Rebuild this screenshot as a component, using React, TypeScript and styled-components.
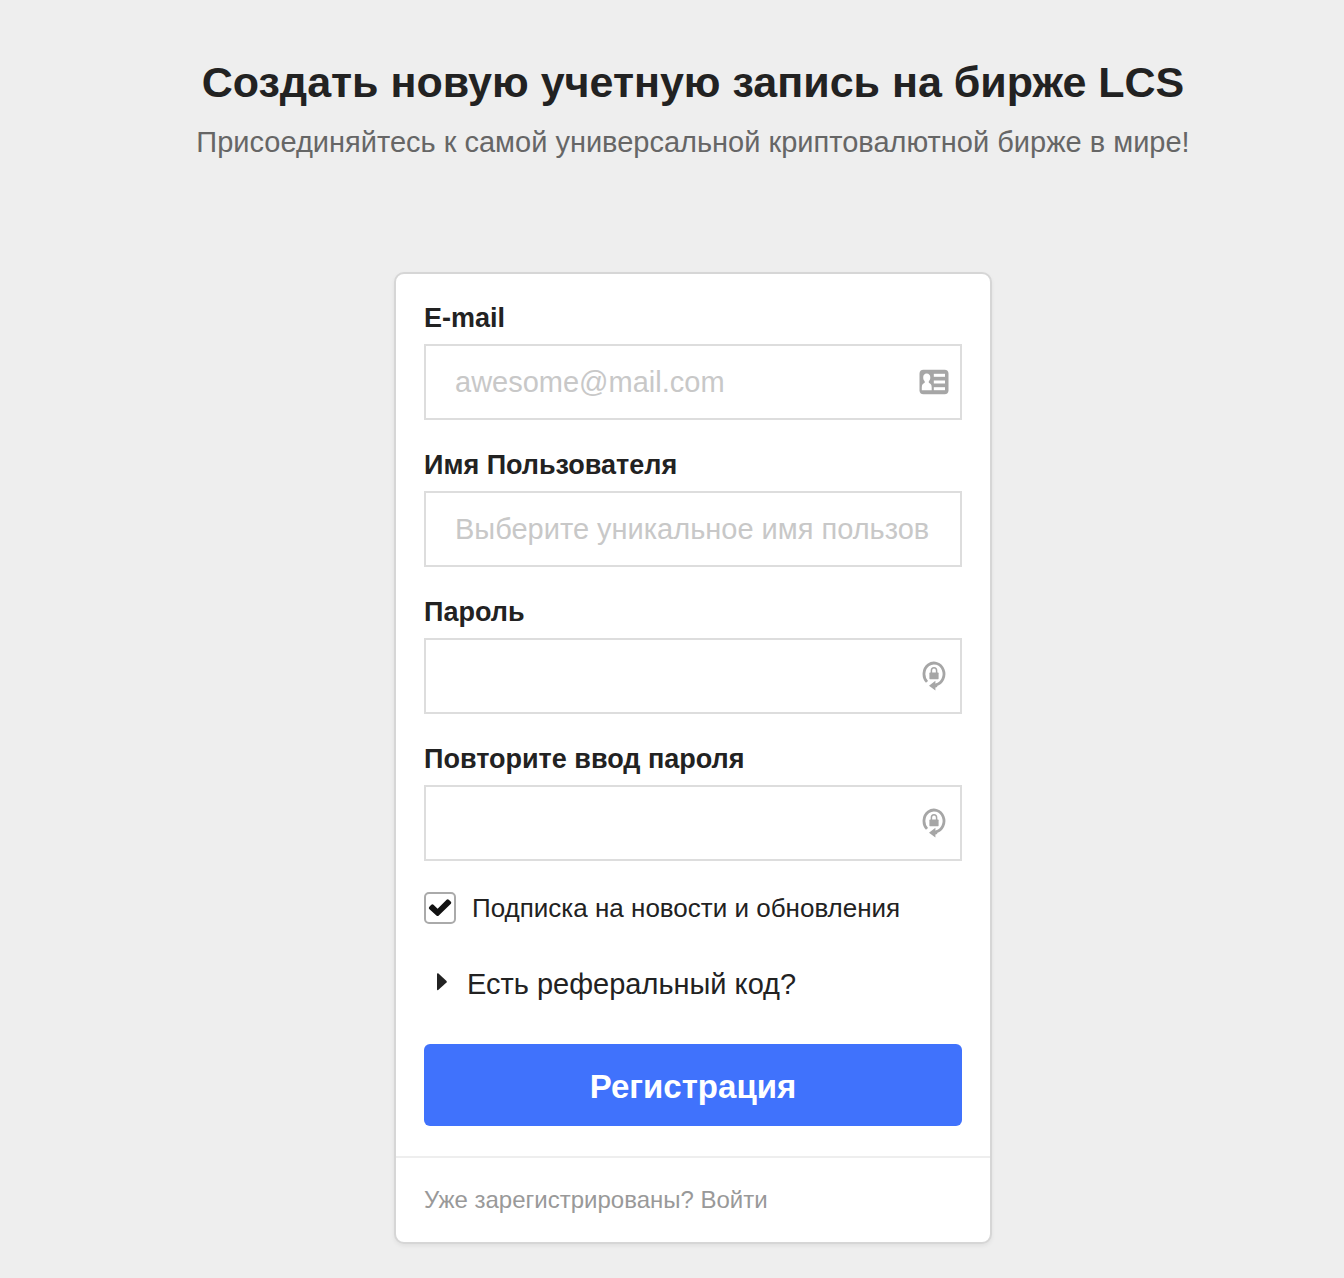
import React from "react";
import styled, { createGlobalStyle } from "styled-components";

const GlobalStyle = createGlobalStyle`
  *, *::before, *::after { box-sizing: border-box; }
  body {
    margin: 0;
    background: #eeeeee;
    color: #222222;
    font-family: "Liberation Sans", Arial, sans-serif;
    -webkit-font-smoothing: antialiased;
  }
`;

const Page = styled.main`
  display: flex;
  flex-direction: column;
  align-items: center;
  padding: 54px 0 34px 42px;
`;

const Header = styled.header`
  text-align: center;
  margin-bottom: 112px;
`;

const Title = styled.h1`
  margin: 0;
  font-size: 43px;
  line-height: 56px;
  font-weight: 700;
`;

const Subtitle = styled.p`
  margin: 14px 0 0;
  font-size: 29px;
  line-height: 36px;
  color: #666666;
`;

const Card = styled.section`
  width: 100%;
  max-width: 598px;
  background: #ffffff;
  border: 2px solid #d6d6d6;
  border-radius: 10px;
  box-shadow: 0 2px 4px rgba(0, 0, 0, 0.06);
`;

const Form = styled.form`
  padding: 28px 28px 30px;
`;

const Field = styled.div`
  margin-bottom: 29px;
`;

const Label = styled.label`
  display: block;
  margin-bottom: 10px;
  font-size: 27px;
  line-height: 32px;
  font-weight: 700;
`;

const InputWrap = styled.div`
  position: relative;
`;

const Input = styled.input`
  display: block;
  width: 100%;
  height: 76px;
  padding: 0 30px 0 29px;
  border: 2px solid #dddddd;
  border-radius: 0;
  background: #ffffff;
  color: #222222;
  font: 29px "Liberation Sans", Arial, sans-serif;
  outline: none;

  &::placeholder {
    color: #c8c8c8;
    opacity: 1;
  }
`;

const Adornment = styled.span`
  position: absolute;
  top: 0;
  bottom: 0;
  right: 12px;
  width: 32px;
  display: flex;
  align-items: center;
  justify-content: center;
  pointer-events: none;
`;

const CheckRow = styled.label`
  display: flex;
  align-items: center;
  gap: 16px;
  margin-top: 31px;
  font-size: 26px;
  line-height: 30px;
`;

const CheckBox = styled.span`
  position: relative;
  display: flex;
  width: 32px;
  height: 32px;

  svg {
    position: absolute;
    inset: 0;
    pointer-events: none;
  }
`;

const CheckInput = styled.input`
  appearance: none;
  width: 32px;
  height: 32px;
  margin: 0;
  border: 2px solid #aaaaaa;
  border-radius: 5px;
  background: #ffffff;

  &:not(:checked) + svg {
    display: none;
  }
`;

const Referral = styled.details`
  margin: 42px 0;
`;

const Summary = styled.summary`
  display: flex;
  align-items: center;
  gap: 19px;
  padding-left: 12px;
  font-size: 29px;
  line-height: 36px;
  list-style: none;
  cursor: pointer;

  &::-webkit-details-marker {
    display: none;
  }
`;

const ReferralBody = styled.div`
  padding-top: 16px;
`;

const Submit = styled.button`
  display: block;
  width: 100%;
  height: 82px;
  padding: 4px 0 0;
  border: 0;
  border-radius: 6px;
  background: #4072fc;
  color: #ffffff;
  font: 700 33px "Liberation Sans", Arial, sans-serif;
  cursor: pointer;
`;

const Footer = styled.footer`
  padding: 26px 28px;
  border-top: 2px solid #eeeeee;
  font-size: 24px;
  line-height: 32px;
  color: #999999;
`;

const Link = styled.a`
  color: inherit;
  text-decoration: none;
`;

const ContactIcon = () => (
  <svg width="30" height="26" viewBox="0 0 30 26" aria-hidden="true">
    <rect x="0.5" y="0.8" width="29" height="24.4" rx="4" fill="#a6a6a6" />
    <g fill="#ffffff">
      <path d="M7.7 4.6c2.3 0 3.6 1.7 3.6 3.9 0 1.6-.6 2.9-1.5 3.8v1.5c1.7.7 2.9 1.9 2.9 4.6v2.8H2.8v-2.8c0-2.7 1.2-3.9 2.9-4.6v-1.5c-.9-.9-1.5-2.2-1.5-3.8 0-2.2 1.2-3.9 3.5-3.9z" />
      <rect x="14.8" y="4.8" width="11.2" height="3" />
      <rect x="14.8" y="11.5" width="11.2" height="3" />
      <rect x="14.8" y="18.2" width="11.2" height="3" />
    </g>
  </svg>
);

const PasswordIcon = () => (
  <svg width="26" height="30" viewBox="0 0 26 30" aria-hidden="true">
    <path d="M6 20.9A10 11 0 1 1 15 23.8" fill="none" stroke="#a6a6a6" strokeWidth="2.8" />
    <path d="M8 24.8l6.4-5v2.8l1.8.4v3l-1.8.5v3z" fill="#a6a6a6" />
    <rect x="8.4" y="11.6" width="9.2" height="6.6" rx="0.6" fill="#a6a6a6" />
    <path d="M10.4 12V9.6a2.6 2.8 0 0 1 5.2 0V12" fill="none" stroke="#a6a6a6" strokeWidth="1.5" />
  </svg>
);

const CheckIcon = () => (
  <svg width="32" height="32" viewBox="0 0 32 32" aria-hidden="true">
    <path
      d="M5.2 14.9l2.1-2.1q1.1-.9 2.2 0l4.1 3.9 9-9q1.1-.9 2.2 0l2.1 2.1q.8 1 0 2L14.8 23.6q-1.2 1-2.4 0L5.2 16.9q-.8-1 0-2z"
      fill="#111111"
    />
  </svg>
);

const CaretIcon = () => (
  <svg width="12" height="24" viewBox="0 0 12 24" aria-hidden="true">
    <path d="M1 1.8q.2-1 1.2-.5l8.3 7.8q.7.7 0 1.4l-8.3 7.6q-1 .5-1.2-.5z" fill="#222222" />
  </svg>
);

type FieldProps = {
  id: string;
  label: string;
  type: string;
  placeholder?: string;
  icon?: React.ReactNode;
};

const FormField = ({ id, label, type, placeholder, icon }: FieldProps) => (
  <Field>
    <Label htmlFor={id}>{label}</Label>
    <InputWrap>
      <Input id={id} name={id} type={type} placeholder={placeholder} />
      {icon && <Adornment>{icon}</Adornment>}
    </InputWrap>
  </Field>
);

export default function App() {
  return (
    <>
      <GlobalStyle />
      <Page>
        <Header>
          <Title>Создать новую учетную запись на бирже LCS</Title>
          <Subtitle>Присоединяйтесь к самой универсальной криптовалютной бирже в мире!</Subtitle>
        </Header>
        <Card>
          <Form onSubmit={(event) => event.preventDefault()}>
            <FormField id="email" label="E-mail" type="email" placeholder="awesome@mail.com" icon={<ContactIcon />} />
            <FormField
              id="username"
              label="Имя Пользователя"
              type="text"
              placeholder="Выберите уникальное имя пользователя"
            />
            <FormField id="password" label="Пароль" type="password" icon={<PasswordIcon />} />
            <FormField id="confirm" label="Повторите ввод пароля" type="password" icon={<PasswordIcon />} />
            <CheckRow htmlFor="news">
              <CheckBox>
                <CheckInput id="news" name="news" type="checkbox" defaultChecked />
                <CheckIcon />
              </CheckBox>
              Подписка на новости и обновления
            </CheckRow>
            <Referral>
              <Summary>
                <CaretIcon />
                Есть реферальный код?
              </Summary>
              <ReferralBody>
                <Input name="referral" type="text" aria-label="Реферальный код" />
              </ReferralBody>
            </Referral>
            <Submit type="submit">Регистрация</Submit>
          </Form>
          <Footer>
            Уже зарегистрированы? <Link href="#login">Войти</Link>
          </Footer>
        </Card>
      </Page>
    </>
  );
}
